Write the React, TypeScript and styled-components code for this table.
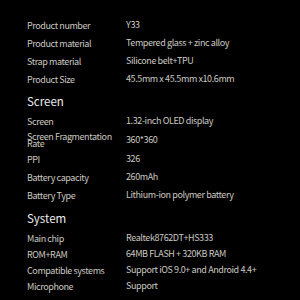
import React from "react";
import styled, { createGlobalStyle } from "styled-components";

type Spec = [string, string];

type Section = {
  title?: string;
  titleHeight: number;
  rowHeight: number;
  rows: Spec[];
};

const sections: Section[] = [
  {
    titleHeight: 16,
    rowHeight: 18,
    rows: [
      ["Product number", "Y33"],
      ["Product material", "Tempered glass + zinc alloy"],
      ["Strap material", "Silicone belt+TPU"],
      ["Product Size", "45.5mm x 45.5mm x10.6mm"],
    ],
  },
  {
    title: "Screen",
    titleHeight: 24,
    rowHeight: 18,
    rows: [
      ["Screen", "1.32-inch OLED display"],
      ["Screen Fragmentation Rate", "360*360"],
      ["PPI", "326"],
      ["Battery capacity", "260mAh"],
      ["Battery Type", "Lithium-ion polymer battery"],
    ],
  },
  {
    title: "System",
    titleHeight: 26,
    rowHeight: 16,
    rows: [
      ["Main chip", "Realtek8762DT+HS333"],
      ["ROM+RAM", "64MB FLASH +  320KB RAM"],
      ["Compatible systems", "Support iOS 9.0+ and Android 4.4+"],
      ["Microphone", "Support"],
    ],
  },
];

function App() {
  return (
    <>
      <GlobalStyle />
      <Page>
        {sections.map((section, i) => (
          <div key={i}>
            <Title height={section.titleHeight}>{section.title}</Title>
            {section.rows.map(([label, value]) => (
              <Row key={label} height={label.length > 20 ? 20 : section.rowHeight}>
                <Label>{label}</Label>
                <Value>{value}</Value>
              </Row>
            ))}
          </div>
        ))}
      </Page>
    </>
  );
}

const GlobalStyle = createGlobalStyle`
  html, body {
    margin: 0;
    background: #000000;
  }
`;

const Page = styled.div`
  width: 300px;
  height: 300px;
  background: #000000;
  padding-left: 27px;
  box-sizing: border-box;
  font-family: "Noto Sans CJK SC", "Noto Sans", sans-serif;
  overflow: hidden;
`;

const Title = styled.div<{ height: number }>`
  height: ${(p) => p.height}px;
  display: flex;
  align-items: center;
  padding-top: 2px;
  box-sizing: border-box;
  font-size: 11.5px;
  color: #ececec;
`;

const Row = styled.div<{ height: number }>`
  height: ${(p) => p.height}px;
  display: grid;
  grid-template-columns: 99px 1fr;
  align-items: center;
`;

const Label = styled.div`
  max-width: 90px;
  font-size: 9px;
  line-height: 7px;
  letter-spacing: -0.4px;
  color: #cbc8c1;
`;

const Value = styled.div`
  font-size: 9px;
  line-height: 12px;
  letter-spacing: -0.4px;
  color: #cbc8c1;
  white-space: nowrap;
`;

export default App;
